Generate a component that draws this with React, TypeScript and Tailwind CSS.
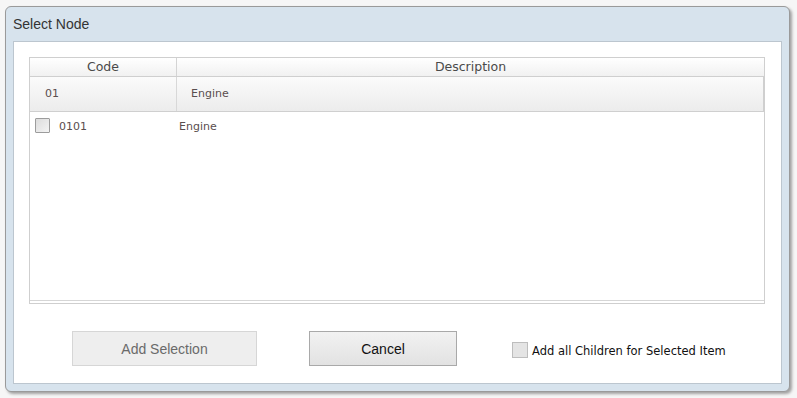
export default function App() {
  return (
    <div className="w-[797px] h-[398px] bg-[#f6f6f6] pl-[5px] pt-[6px]">
      {/* Dialog */}
      <div className="w-[785px] h-[386px] flex flex-col rounded-[6px] border border-[#9a9a9a] bg-[#d7e3ed] shadow-[2px_2px_3px_rgba(0,0,0,0.35)]">
        <div className="h-[34px] flex items-center pl-[7px] text-[14px] text-[#333] font-['Liberation_Sans',Arial,sans-serif]">
          Select Node
        </div>

        {/* Panel */}
        <div className="mx-[7px] mb-[7px] flex-1 border border-[#bcc6cf] bg-white pt-[15px] pl-[15px] pr-[16px]">
          {/* Table */}
          <div className="h-[247px] border border-[#cfcfcf] flex flex-col font-['DejaVu_Sans',Tahoma,sans-serif]">
            <div className="h-[19px] flex border-b border-[#cfcfcf] bg-gradient-to-b from-white to-[#f1f1f1] text-[12.5px] text-[#4a4a4a]">
              <div className="w-[147px] border-r border-[#d4d4d4] flex items-center justify-center">Code</div>
              <div className="flex-1 flex items-center justify-center">Description</div>
            </div>
            <div className="h-[35px] flex border-b border-r border-[#cfcfcf] bg-gradient-to-b from-[#fbfbfb] to-[#ececec] text-[11px] text-[#5a4e4e]">
              <div className="w-[147px] border-r border-[#d8d8d8] flex items-center pl-[15px] pt-[1px]">01</div>
              <div className="flex-1 flex items-center pl-[14px] pt-[1px]">Engine</div>
            </div>
            <div className="flex-1 flex flex-col border-b border-[#d6d6d6] mb-[2px]">
              <div className="h-[28px] flex items-center text-[11px] text-[#5a4e4e]">
                <div className="w-[147px] flex items-center pl-[5px]">
                  <span className="w-[15px] h-[15px] border border-[#9c9c9c] bg-gradient-to-br from-[#dcdcdc] to-[#f4f4f4] rounded-[1px] mt-[-1px]" />
                  <span className="ml-[9px] mt-[2px]">0101</span>
                </div>
                <div className="flex-1 pl-[2px] mt-[2px]">Engine</div>
              </div>
            </div>
          </div>

          {/* Footer */}
          <div className="mt-[27px] flex items-center">
            <button className="ml-[43px] w-[185px] h-[35px] pt-[2px] border border-[#d6d6d6] bg-[#eeeeee] text-[14px] text-[#6a6a6a] font-['Liberation_Sans',Arial,sans-serif]">
              Add Selection
            </button>
            <button className="ml-[52px] w-[148px] h-[35px] pt-[2px] border border-[#a9a9a9] bg-gradient-to-b from-[#f2f2f2] to-[#e2e2e2] text-[14px] text-[#111] font-['Liberation_Sans',Arial,sans-serif]">
              Cancel
            </button>
            <div className="ml-[55px] mt-[4px] flex items-center">
              <span className="w-[16px] h-[16px] border border-[#bdbdbd] bg-[#e4e4e4] mt-[-2px]" />
              <span className="ml-[4px] mt-[2px] text-[11.5px] text-[#111] font-['DejaVu_Sans',Tahoma,sans-serif]">
                Add all Children for Selected Item
              </span>
            </div>
          </div>
        </div>
      </div>
    </div>
  );
}
